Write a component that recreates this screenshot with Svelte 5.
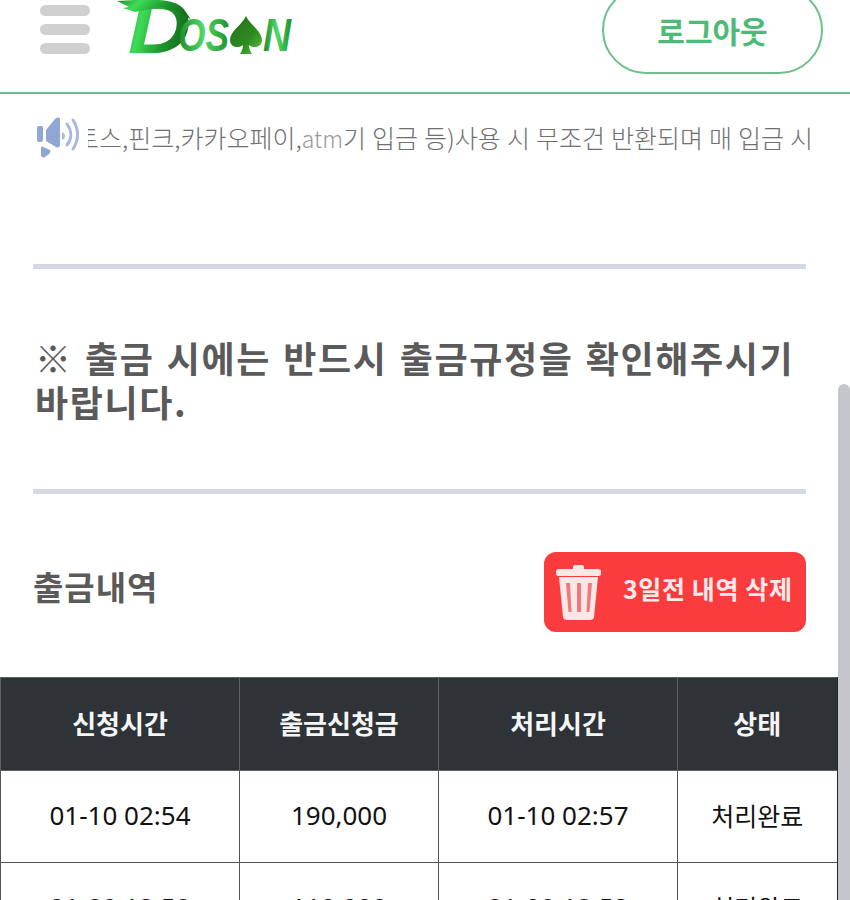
<script lang="ts">
  const columns = [
    { label: '신청시간', width: 239 },
    { label: '출금신청금', width: 199 },
    { label: '처리시간', width: 239 },
    { label: '상태', width: 160 }
  ];

  const rows = [
    ['01-10 02:54', '190,000', '01-10 02:57', '처리완료'],
    ['01-09 12:50', '110,000', '01-09 12:52', '처리완료']
  ];
</script>

<div class="page">
  <header class="topbar">
    <div class="burger">
      <span></span>
      <span></span>
      <span></span>
    </div>
    <svg class="logo" viewBox="0 0 180 58" width="180" height="58" role="img" aria-label="Dosan">
      <defs>
        <linearGradient id="green" x1="0" y1="0" x2="1" y2="0.3">
          <stop offset="0" stop-color="#1f8a2a" />
          <stop offset="0.3" stop-color="#3fdc58" />
          <stop offset="0.65" stop-color="#1f9a2e" />
          <stop offset="1" stop-color="#146f1c" />
        </linearGradient>
        <linearGradient id="greenSoft" x1="0" y1="0" x2="1" y2="0">
          <stop offset="0" stop-color="#1d8a28" />
          <stop offset="0.5" stop-color="#52d868" />
          <stop offset="1" stop-color="#1f8f2c" />
        </linearGradient>
        <linearGradient id="spadeFill" x1="0" y1="0" x2="1" y2="1">
          <stop offset="0" stop-color="#236f18" />
          <stop offset="0.6" stop-color="#2f8a22" />
          <stop offset="1" stop-color="#58c83c" />
        </linearGradient>
      </defs>
      <text class="logo-d" x="13" y="53" textLength="63" lengthAdjust="spacingAndGlyphs" fill="url(#green)">D</text>
      <path fill="url(#green)" d="M2 1l18-1h24c14 1 26 8 32 20-8-7-18-11-30-13L20 12 8 8l6-1z" />
      <text class="logo-rest" x="63" y="51" textLength="51" lengthAdjust="spacingAndGlyphs" fill="url(#greenSoft)">OS</text>
      <path fill="url(#spadeFill)" d="M131 16c4 9 16 15 16 24 0 7-8 9-13 5 0 3 1 6 3 9h-12c2-3 3-6 3-9-5 4-13 2-13-5 0-9 12-15 16-24z" />
      <text class="logo-rest" x="148" y="51" textLength="28" lengthAdjust="spacingAndGlyphs" fill="url(#greenSoft)">N</text>
    </svg>
    <button class="logout">로그아웃</button>
  </header>

  <div class="notice">
    <svg class="speaker" viewBox="0 0 42 41" width="42" height="41">
      <rect x="0" y="9" width="6" height="16" rx="2" fill="#8fa6d6" />
      <path fill="#8fa6d6" d="M9 13l9-11c2-2 5-2 5 0v26c0 2-2 3-4 2l-10-6z" />
      <path fill="#8fa6d6" d="M4 31c0-1 1-2 2-1l7 3c1 1 0 3-1 4l-4 3c-2 1-4 0-4-2z" />
      <path fill="#a9b9de" d="M25 15c2 1 3 2 3 4s-1 3-3 4z" />
      <path fill="none" stroke="#a9b9de" stroke-width="3" stroke-linecap="round" d="M30 7c5 7 5 15 0 21" />
      <path fill="none" stroke="#a9b9de" stroke-width="3" stroke-linecap="round" d="M36 3c6 9 6 20 0 29" />
    </svg>
    <div class="ticker">
      <span class="ticker-text">토스,핀크,카카오페이,<span class="latin">atm</span>기 입금 등)사용 시 무조건 반환되며 매 입금 시</span>
    </div>
  </div>

  <main class="content">
    <hr class="rule" />
    <h2 class="warning">※ 출금 시에는 반드시 출금규정을 확인해주시기 바랍니다.</h2>
    <hr class="rule" />

    <div class="history-head">
      <h3>출금내역</h3>
      <button class="delete">
        <svg viewBox="0 0 46 57" width="46" height="57">
          <rect x="17" y="1" width="11" height="6" rx="2" fill="#fde6e6" />
          <rect x="0" y="5" width="45" height="7" rx="2.5" fill="#fde6e6" />
          <path fill="#fde6e6" d="M3 13h39l-4 40c0 2-2 3-4 3H11c-2 0-4-1-4-3z" />
          <path fill="#f2797b" d="M10 19h4l1.500 29h-3zM21 19h4v29h-4zM32 19h4l-2.500 29h-3z" />
        </svg>
        <span>3일전 내역 삭제</span>
      </button>
    </div>

    <table class="history">
      <colgroup>
        {#each columns as col}
          <col style="width: {col.width}px" />
        {/each}
      </colgroup>
      <thead>
        <tr>
          {#each columns as col}
            <th>{col.label}</th>
          {/each}
        </tr>
      </thead>
      <tbody>
        {#each rows as row}
          <tr>
            {#each row as cell}
              <td>{cell}</td>
            {/each}
          </tr>
        {/each}
      </tbody>
    </table>
  </main>

  <div class="scrollbar"></div>
</div>

<style>
  :global(body) {
    margin: 0;
    background: #fff;
    font-family: "Noto Sans CJK KR", "Noto Sans", sans-serif;
  }
  .page {
    position: relative;
    width: 850px;
    height: 900px;
    overflow: hidden;
    background: #fff;
  }
  .topbar {
    height: 92px;
    border-bottom: 2px solid #6cc08b;
    display: flex;
    align-items: flex-start;
    padding-left: 40px;
    padding-right: 27px;
  }
  .burger {
    width: 50px;
    margin-top: 5px;
    display: flex;
    flex-direction: column;
    gap: 8px;
    flex: none;
  }
  .burger span {
    height: 11px;
    border-radius: 6px;
    background: #d0d0d0;
  }
  .logo {
    margin-left: 25px;
    flex: none;
  }
  .logo-d {
    font: italic 700 76px "Liberation Sans", sans-serif;
  }
  .logo-rest {
    font: italic 700 46px "Liberation Sans", sans-serif;
  }
  .logout {
    margin-left: auto;
    margin-top: -14px;
    width: 221px;
    height: 88px;
    border: 2px solid #6cc08b;
    border-radius: 44px;
    background: #fff;
    color: #4cbb78;
    font: 700 30px "Noto Sans CJK KR", sans-serif;
    padding: 0;
  }
  .notice {
    height: 70px;
    padding-top: 8px;
    display: flex;
    align-items: center;
    padding-left: 37px;
    gap: 9px;
  }
  .speaker {
    flex: none;
    margin-top: 1px;
  }
  .ticker {
    width: 723px;
    overflow: hidden;
    white-space: nowrap;
  }
  .ticker-text {
    display: inline-block;
    margin-left: -12px;
    font-size: 25px;
    font-weight: 300;
    word-spacing: 0.5px;
    color: #707070;
    line-height: 32px;
  }
  .latin {
    font-size: 23px;
    color: #999;
  }
  .content {
    padding-top: 92px;
  }
  .rule {
    margin: 0 44px 0 33px;
    height: 5px;
    border: 0;
    background: #d3d8e2;
  }
  .warning {
    margin: 0;
    padding: 66px 44px 66px 35px;
    font-size: 36px;
    line-height: 44px;
    letter-spacing: 1.6px;
    word-spacing: 2.6px;
    font-weight: 700;
    color: #5a5a5a;
  }
  .history-head {
    margin: 58px 44px 45px 33px;
    display: flex;
    justify-content: space-between;
    align-items: center;
  }
  .history-head h3 {
    margin: 0 0 12px;
    font-size: 33px;
    letter-spacing: 1px;
    line-height: 40px;
    font-weight: 700;
    color: #5a5a5a;
  }
  .delete {
    width: 262px;
    height: 80px;
    border: 0;
    border-radius: 12px;
    background: #fb3c3f;
    color: #fdeaea;
    display: flex;
    align-items: center;
    gap: 21px;
    padding: 0 0 0 12px;
    font: 700 25px "Noto Sans CJK KR", sans-serif;
    letter-spacing: 0.6px;
  }
  .delete span {
    line-height: 34px;
    margin-bottom: 9px;
  }
  .history {
    width: 837px;
    table-layout: fixed;
    border-collapse: collapse;
    font-family: "Noto Sans", "Noto Sans CJK KR", sans-serif;
    font-size: 26px;
    color: #111;
  }
  .history th,
  .history td {
    height: 88px;
    padding: 0 0 3px;
    border: 1px solid #4f5256;
    text-align: center;
  }
  .history th {
    background: #2e3338;
    color: #f5f5f5;
    font-weight: 700;
    font-family: "Noto Sans CJK KR", sans-serif;
    height: 89px;
    border-color: #5c5f63;
  }
  .history th:last-child,
  .history td:last-child {
    border-right: 2px solid #23262a;
  }
  .history td {
    background: #fff;
  }
  .history td:last-child {
    font-family: "Noto Sans CJK KR", sans-serif;
    font-size: 25px;
  }
  .scrollbar {
    position: absolute;
    right: 0;
    top: 384px;
    width: 12px;
    height: 516px;
    border-radius: 6px 6px 0 0;
    background: #c4c6cc;
  }
</style>
